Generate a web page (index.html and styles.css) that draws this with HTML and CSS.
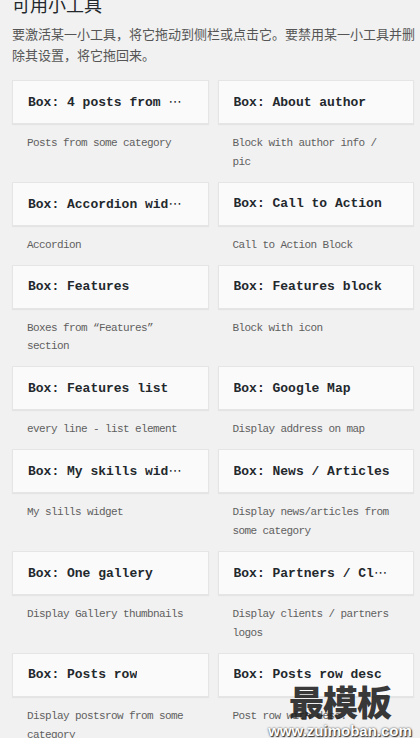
FILE: index.html
```html
<!DOCTYPE html>
<html lang="zh-CN">
<head>
<meta charset="utf-8">
<title>可用小工具</title>
<link rel="stylesheet" href="styles.css">
</head>
<body>
<div class="page">
  <h2 class="title">可用小工具</h2>
  <p class="intro">要激活某一小工具，将它拖动到侧栏或点击它。要禁用某一小工具并删除其设置，将它拖回来。</p>
  <div class="widgets">
    <div class="widget"><div class="widget-top"><h3>Box: 4 posts from <span class="more">⋯</span></h3></div><p class="desc">Posts from some category</p></div>
    <div class="widget"><div class="widget-top"><h3>Box: About author</h3></div><p class="desc">Block with author info / pic</p></div>
    <div class="widget"><div class="widget-top"><h3>Box: Accordion wid<span class="more">⋯</span></h3></div><p class="desc">Accordion</p></div>
    <div class="widget"><div class="widget-top"><h3>Box: Call to Action</h3></div><p class="desc">Call to Action Block</p></div>
    <div class="widget"><div class="widget-top"><h3>Box: Features</h3></div><p class="desc">Boxes from “Features” section</p></div>
    <div class="widget"><div class="widget-top"><h3>Box: Features block</h3></div><p class="desc">Block with icon</p></div>
    <div class="widget"><div class="widget-top"><h3>Box: Features list</h3></div><p class="desc">every line - list element</p></div>
    <div class="widget"><div class="widget-top"><h3>Box: Google Map</h3></div><p class="desc">Display address on map</p></div>
    <div class="widget"><div class="widget-top"><h3>Box: My skills wid<span class="more">⋯</span></h3></div><p class="desc">My slills widget</p></div>
    <div class="widget"><div class="widget-top"><h3>Box: News / Articles</h3></div><p class="desc">Display news/articles from some category</p></div>
    <div class="widget"><div class="widget-top"><h3>Box: One gallery</h3></div><p class="desc">Display Gallery thumbnails</p></div>
    <div class="widget"><div class="widget-top"><h3>Box: Partners / Cl<span class="more">⋯</span></h3></div><p class="desc">Display clients / partners logos</p></div>
    <div class="widget"><div class="widget-top"><h3>Box: Posts row</h3></div><p class="desc">Display postsrow from some category</p></div>
    <div class="widget"><div class="widget-top"><h3>Box: Posts row desc</h3></div><p class="desc">Post row with desc.</p></div>
  </div>
</div>
<div class="watermark">
  <span class="wm-cn">最模板</span>
  <span class="wm-url">www.zuimoban.com</span>
</div>
</body>
</html>
```
FILE: styles.css
```css
html, body {
  margin: 0;
  padding: 0;
}
body {
  background: #f1f1f1;
  position: relative;
  overflow: hidden;
  height: 738px;
}
.page {
  padding: 0 4px 0 12px;
}
.title {
  margin: -5px 0 0 0;
  font-family: "Noto Sans CJK SC", sans-serif;
  font-weight: 400;
  font-size: 18px;
  line-height: 18px;
  color: #23282d;
}
.intro {
  margin: 11px 0 0 0;
  font-family: "Noto Sans CJK SC", sans-serif;
  font-size: 13px;
  line-height: 20.5px;
  color: #555;
}
.widgets {
  margin: 15px 2px 0 0;
  display: grid;
  grid-template-columns: 1fr 1fr;
  column-gap: 9px;
}
.widget-top {
  height: 42px;
  background: #fafafa;
  border: 1px solid #e5e5e5;
  box-shadow: 0 1px 1px rgba(0, 0, 0, 0.05);
  display: flex;
  align-items: center;
  padding: 0 15px;
}
.widget-top h3 {
  margin: 0;
  font-family: "Liberation Mono", monospace;
  font-weight: 700;
  font-size: 13px;
  color: #23282d;
  white-space: nowrap;
  overflow: hidden;
}
.more {
  font-family: "DejaVu Sans", sans-serif;
  font-weight: 400;
  font-size: 13px;
}
.desc {
  margin: 0;
  padding: 10px 15px 10.3px 15px;
  font-family: "Liberation Mono", monospace;
  font-size: 11px;
  letter-spacing: -0.6px;
  line-height: 18.7px;
  color: #5f5f5f;
}
.watermark {
  position: absolute;
  left: 264px;
  top: 680px;
  width: 152px;
  display: flex;
  flex-direction: column;
  align-items: center;
}
.wm-cn {
  font-family: "Noto Sans CJK SC", sans-serif;
  font-weight: 900;
  font-size: 35px;
  line-height: 42px;
  color: rgba(30, 30, 30, 0.9);
  letter-spacing: -1px;
}
.wm-url {
  margin-top: 1px;
  font-family: "Liberation Sans", sans-serif;
  font-weight: 700;
  font-size: 15px;
  line-height: 16px;
  color: #fff;
  text-shadow: 0 0 2px #333, 1px 1px 1px #333;
}
```
